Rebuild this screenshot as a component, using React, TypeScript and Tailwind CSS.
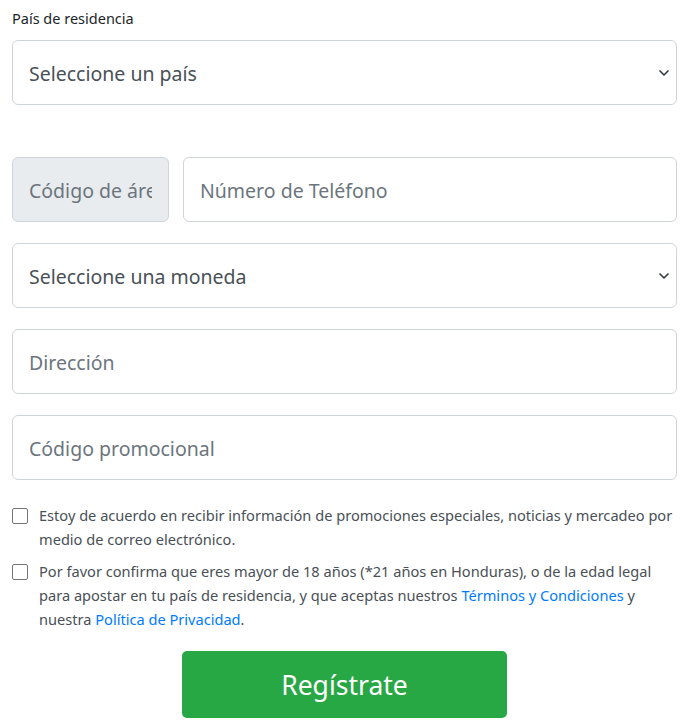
import { ChevronDown } from "lucide-react";

const FONT = { fontFamily: '"Noto Sans", "Open Sans", sans-serif' };

function SelectBox({ label }: { label: string }) {
  return (
    <div className="flex h-[65px] items-center justify-between rounded-[6px] border border-[#ced4da] bg-white pl-[16px] pr-[4px] pt-[3px]">
      <span className="text-[19.5px] text-[#495057]">{label}</span>
      <ChevronDown size={16} strokeWidth={2.5} className="-mt-[3px] text-[#343a40]" />
    </div>
  );
}

function InputBox({ placeholder, className = "" }: { placeholder: string; className?: string }) {
  return (
    <div className={`flex h-[65px] items-center rounded-[6px] border border-[#ced4da] pl-[16px] pr-[16px] pt-[3px] ${className}`}>
      <div className="flex-1 overflow-hidden whitespace-nowrap text-[19.5px] text-[#6c757d]">{placeholder}</div>
    </div>
  );
}

function Check({ children }: { children: React.ReactNode }) {
  return (
    <label className="flex items-start gap-[11px] text-[14.6px] leading-[24px] text-[#495057]">
      <span className="mt-[5px] h-[16px] w-[16px] shrink-0 rounded-[2px] border border-[#767676] bg-white" />
      <span>{children}</span>
    </label>
  );
}

export default function App() {
  return (
    <div className="min-h-[727px] bg-white pl-[12px] pr-[13px] pt-[8px]" style={FONT}>
      <div className="text-[14.5px] leading-[20px] text-[#212529]">País de residencia</div>
      <div className="mt-[12px]">
        <SelectBox label="Seleccione un país" />
      </div>

      <div className="mt-[52px] flex gap-[14px]">
        <InputBox placeholder="Código de área" className="w-[157px] shrink-0 bg-[#e9ecef]" />
        <InputBox placeholder="Número de Teléfono" className="flex-1 bg-white" />
      </div>

      <div className="mt-[21px] flex flex-col gap-[21px]">
        <SelectBox label="Seleccione una moneda" />
        <InputBox placeholder="Dirección" className="bg-white" />
        <InputBox placeholder="Código promocional" className="bg-white" />
      </div>

      <div className="mt-[23px] flex flex-col gap-[8px]">
        <Check>
          Estoy de acuerdo en recibir información de promociones especiales, noticias y mercadeo por medio de correo electrónico.
        </Check>
        <Check>
          Por favor confirma que eres mayor de 18 años (*21 años en Honduras), o de la edad legal para apostar en tu país de residencia, y que aceptas nuestros{" "}
          <a className="text-[#007bff]">Términos y Condiciones</a> y nuestra{" "}
          <a className="text-[#007bff]">Política de Privacidad</a>.
        </Check>
      </div>

      <div className="mt-[20px] flex justify-center">
        <button className="h-[67px] w-[325px] rounded-[5px] bg-[#28a745] pt-[2px] text-[26.5px] text-white">Regístrate</button>
      </div>
    </div>
  );
}
